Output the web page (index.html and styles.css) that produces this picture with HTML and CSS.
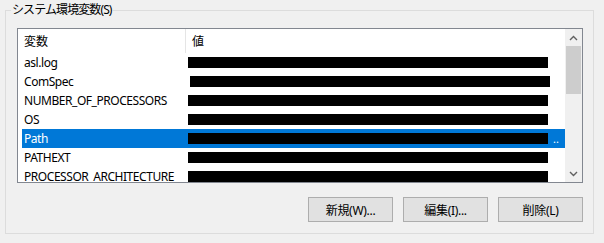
FILE: index.html
```html
<!DOCTYPE html>
<html lang="ja">
<head>
<meta charset="utf-8">
<title>システム環境変数</title>
<link rel="stylesheet" href="styles.css">
</head>
<body>
<fieldset class="group">
  <legend class="group-title">システム環境変数(S)</legend>
  <div class="listbox">
    <div class="list">
      <div class="list-header">
        <div class="hcell hcell-name">変数</div>
        <div class="hcell hcell-value">値</div>
      </div>
      <div class="row"><div class="cell-name">asl.log</div><div class="cell-value"><span class="redact"></span></div></div>
      <div class="row"><div class="cell-name">ComSpec</div><div class="cell-value shift"><span class="redact"></span></div></div>
      <div class="row"><div class="cell-name">NUMBER_OF_PROCESSORS</div><div class="cell-value"><span class="redact"></span></div></div>
      <div class="row"><div class="cell-name">OS</div><div class="cell-value"><span class="redact"></span></div></div>
      <div class="row selected"><div class="cell-name">Path</div><div class="cell-value"><span class="redact"></span><span class="more">..</span></div></div>
      <div class="row"><div class="cell-name">PATHEXT</div><div class="cell-value"><span class="redact"></span></div></div>
      <div class="row"><div class="cell-name">PROCESSOR_ARCHITECTURE</div><div class="cell-value"><span class="redact"></span></div></div>
    </div>
    <div class="scrollbar">
      <div class="sb-btn">
        <svg width="9" height="6" viewBox="0 0 9 6"><path d="M1 5 L4.5 1.5 L8 5" fill="none" stroke="#606060" stroke-width="1.4"/></svg>
      </div>
      <div class="sb-thumb"></div>
      <div class="sb-track"></div>
      <div class="sb-btn">
        <svg width="9" height="6" viewBox="0 0 9 6"><path d="M1 1 L4.5 4.5 L8 1" fill="none" stroke="#606060" stroke-width="1.4"/></svg>
      </div>
    </div>
  </div>
  <div class="buttons">
    <button class="btn">新規(W)...</button>
    <button class="btn">編集(I)...</button>
    <button class="btn">削除(L)</button>
  </div>
</fieldset>
</body>
</html>
```
FILE: styles.css
```css
html, body {
  margin: 0;
  padding: 0;
  background: #f0f0f0;
}
body {
  width: 604px;
  height: 243px;
  overflow: hidden;
  font-family: "Noto Sans", "Noto Sans CJK JP", sans-serif;
  font-size: 12px;
  color: #000;
}
.group {
  margin: 0 10px 9px 5px;
  padding: 8px 10px 11px 11px;
  border: 1px solid #dcdcdc;
  min-inline-size: 0;
}
.group-title {
  margin-left: -6px;
  padding: 0 1px;
  height: 20px;
  line-height: 20px;
  font-size: 12px;
  letter-spacing: -0.9px;
}
.listbox {
  display: flex;
  height: 155px;
  box-sizing: border-box;
  border: 1px solid #828790;
  background: #fff;
  overflow: hidden;
}
.list {
  flex: 1;
  overflow: hidden;
}
.list-header {
  display: flex;
  height: 24px;
}
.hcell {
  line-height: 25px;
  padding-left: 6px;
  white-space: nowrap;
}
.hcell-name {
  width: 168px;
  box-sizing: border-box;
  border-right: 1px solid #e5e5e5;
}
.row {
  display: flex;
  align-items: center;
  height: 19px;
  margin-left: 4px;
  white-space: nowrap;
}
.row.selected {
  background: #0078d7;
  color: #fff;
}
.cell-name {
  width: 164px;
  box-sizing: border-box;
  padding-left: 2px;
  line-height: 19px;
  letter-spacing: -0.45px;
}
.cell-value {
  display: flex;
  align-items: center;
  padding-left: 2px;
}
.cell-value.shift {
  padding-left: 4px;
}
.redact {
  display: inline-block;
  width: 360px;
  height: 11px;
  background: #000;
}
.more {
  margin-left: 5px;
  font-size: 11px;
  line-height: 11px;
  color: #fff;
}
.scrollbar {
  width: 17px;
  display: flex;
  flex-direction: column;
  background: #f0f0f0;
}
.sb-btn {
  height: 17px;
  display: flex;
  align-items: center;
  justify-content: center;
}
.sb-thumb {
  height: 48px;
  margin: 0 1px;
  background: #cdcdcd;
}
.sb-track {
  flex: 1;
}
.buttons {
  display: flex;
  justify-content: flex-end;
  gap: 10px;
  margin-top: 14px;
}
.btn {
  width: 85px;
  height: 25px;
  margin: 0;
  padding: 0;
  border: 1px solid #adadad;
  background: #e1e1e1;
  font-family: "Noto Sans", "Noto Sans CJK JP", sans-serif;
  font-size: 12px;
  letter-spacing: -0.3px;
  color: #000;
}
```
